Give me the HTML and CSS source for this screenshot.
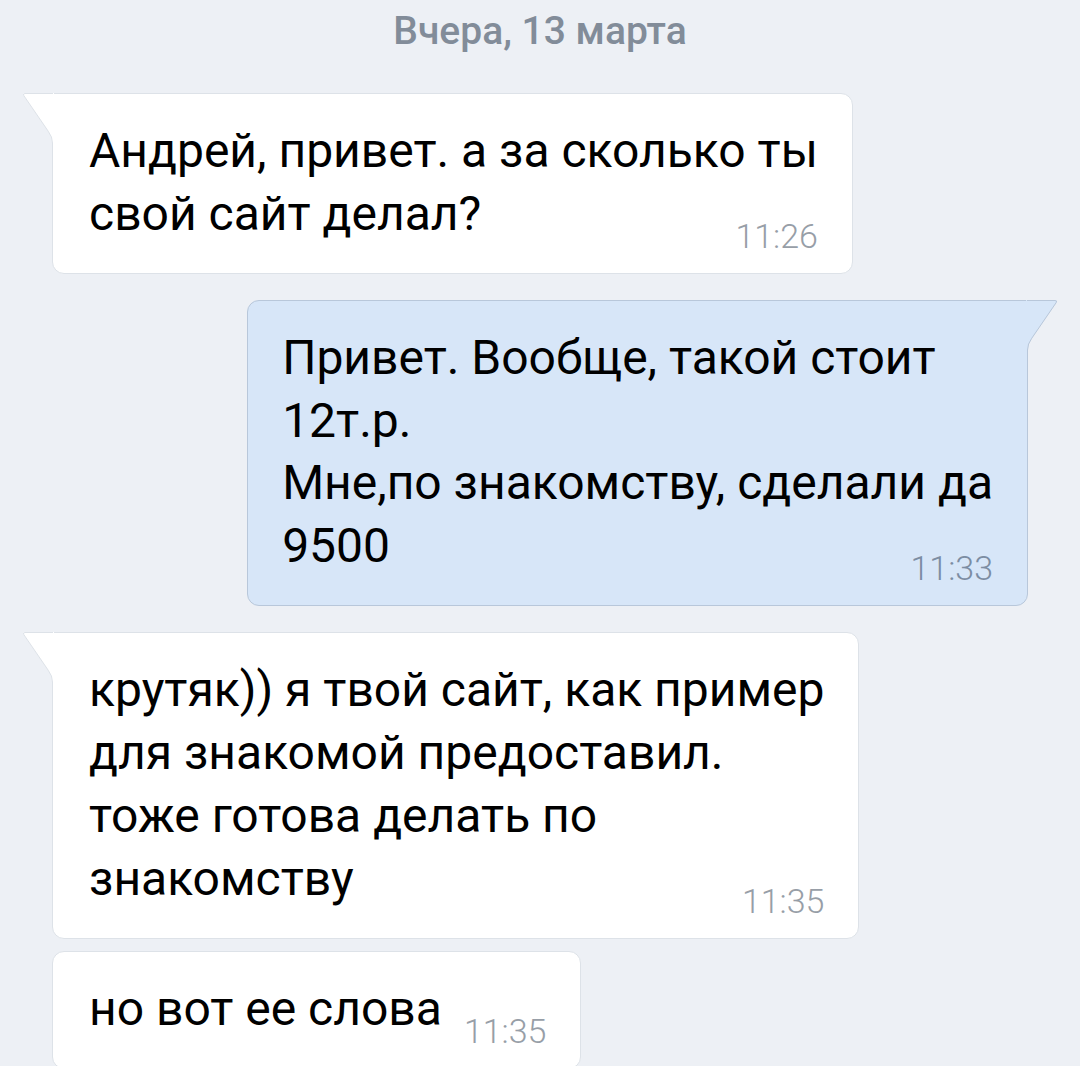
FILE: index.html
```html
<!DOCTYPE html>
<html lang="ru">
<head>
  <meta charset="UTF-8" />
  <meta name="viewport" content="width=device-width, initial-scale=1.0"/>
  <title>Диалог</title>
  <link rel="stylesheet" href="styles.css">
</head>
<body>

  <div class="chat">
    <div class="date">Вчера, 13 марта</div>

    <div class="msg in">
      <div class="bubble">
        <svg class="tail" width="32" height="50" viewBox="0 0 32 50">
          <path class="tail-fill" d="M32 0 H3 Q0 0 1.5 2.5 L26 38 Q30 44 30 50 H32 Z"/>
          <path class="tail-line" d="M31 0.5 H3 Q0.5 0.5 1.8 2.6 L26.2 38.2 Q30.5 44 30.5 50"/>
        </svg>
        <div class="text">Андрей, привет. а за сколько ты<br>свой сайт делал?<span class="time">11:26</span></div>
      </div>
    </div>

    <div class="msg out">
      <div class="bubble">
        <svg class="tail" width="32" height="50" viewBox="0 0 32 50">
          <path class="tail-fill" d="M32 0 H3 Q0 0 1.5 2.5 L26 38 Q30 44 30 50 H32 Z"/>
          <path class="tail-line" d="M31 0.5 H3 Q0.5 0.5 1.8 2.6 L26.2 38.2 Q30.5 44 30.5 50"/>
        </svg>
        <div class="text">Привет. Вообще, такой стоит<br>12т.р.<br>Мне,по знакомству, сделали да<br>9500<span class="time">11:33</span></div>
      </div>
    </div>

    <div class="msg in">
      <div class="bubble">
        <svg class="tail" width="32" height="50" viewBox="0 0 32 50">
          <path class="tail-fill" d="M32 0 H3 Q0 0 1.5 2.5 L26 38 Q30 44 30 50 H32 Z"/>
          <path class="tail-line" d="M31 0.5 H3 Q0.5 0.5 1.8 2.6 L26.2 38.2 Q30.5 44 30.5 50"/>
        </svg>
        <div class="text">крутяк)) я твой сайт, как пример<br>для знакомой предоставил.<br>тоже готова делать по<br>знакомству<span class="time">11:35</span></div>
      </div>
    </div>

    <div class="msg in next">
      <div class="bubble plain">
        <div class="text">но вот ее слова<span class="time">11:35</span></div>
      </div>
    </div>
  </div>

</body>
</html>
```

FILE: styles.css
```css
body {
  margin: 0;
  padding: 0;
  background-color: #edf0f5;
  font-family: Roboto, "Noto Sans", sans-serif;
  color: #000;
  overflow: hidden;
}
.chat {
  padding: 0 52px;
}
.date {
  padding-top: 6px;
  height: 50px;
  line-height: 50px;
  font-size: 39px;
  font-weight: 500;
  color: #828c99;
  text-align: center;
  margin-bottom: 37px;
}
.msg {
  display: flex;
  margin-bottom: 26px;
}
.msg.in {
  justify-content: flex-start;
}
.msg.out {
  justify-content: flex-end;
}
.msg.next {
  margin-top: -14px;
}
.bubble {
  position: relative;
  padding: 26px 34px 27px 36px;
  background: #fff;
  border: 1px solid #dde2e8;
  border-radius: 12px;
  border-top-left-radius: 0;
}
.bubble.plain {
  border-top-left-radius: 12px;
}
.msg.out .bubble {
  padding-left: 34px;
  background: #d7e6f8;
  border-color: #b8c7da;
  border-top-left-radius: 12px;
  border-top-right-radius: 0;
}
.tail {
  position: absolute;
  top: -1px;
  left: -31px;
  display: block;
}
.msg.out .tail {
  left: auto;
  right: -31px;
  transform: scaleX(-1);
}
.tail-fill {
  fill: #fff;
}
.tail-line {
  fill: none;
  stroke: #dde2e8;
  stroke-width: 1;
}
.msg.out .tail-fill {
  fill: #d7e6f8;
}
.msg.out .tail-line {
  stroke: #b8c7da;
}
.text {
  display: flow-root;
  font-size: 48px;
  line-height: 62.8px;
  white-space: nowrap;
}
.time {
  float: right;
  margin: 35px 0 -8px 22px;
  font-size: 34px;
  line-height: 36px;
  font-weight: 300;
  color: #979ea7;
}
.msg.out .time {
  color: #7c8da3;
}
```
